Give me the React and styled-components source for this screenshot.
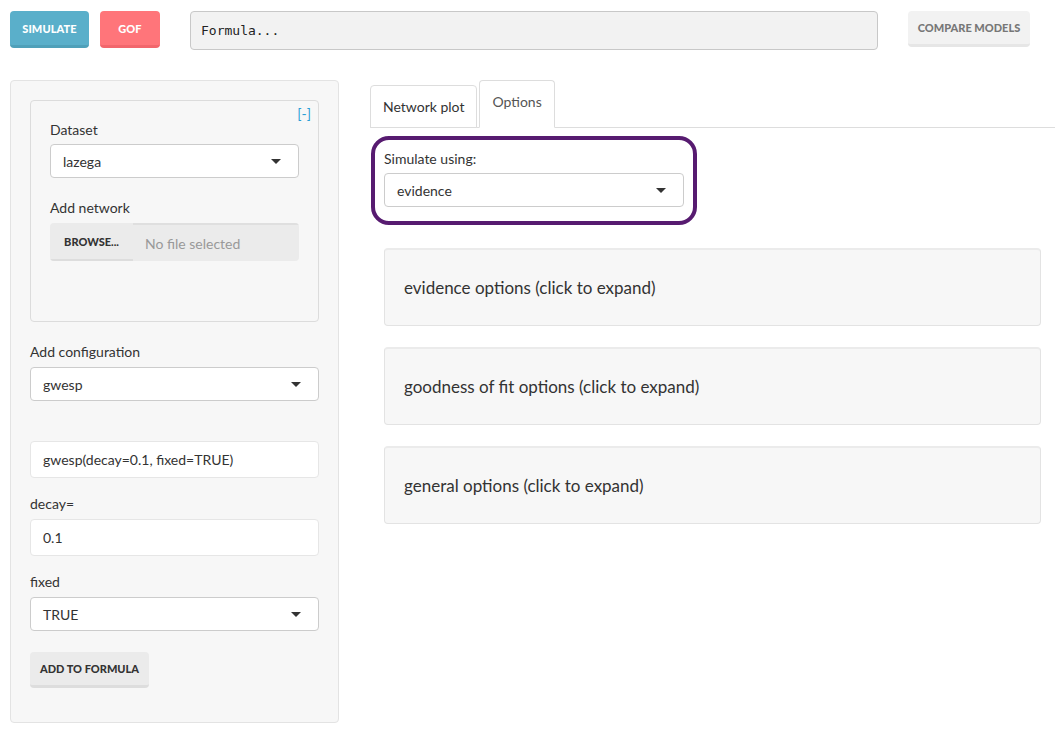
import React from "react"
import styled, { createGlobalStyle } from "styled-components"

const GlobalStyle = createGlobalStyle`
  body {
    margin: 0;
    background: #ffffff;
    color: #333333;
    font-family: "Lato", "Liberation Sans", sans-serif;
    font-size: 14px;
  }
  * {
    box-sizing: border-box;
  }
`

const Page = styled.div`
  width: 1055px;
  height: 729px;
  overflow: hidden;
`

const TopBar = styled.header`
  height: 80px;
  padding: 11px 0 0 10px;
  display: flex;
  align-items: flex-start;
`

const ActionButton = styled.button`
  height: 37px;
  width: ${(p) => p.$width}px;
  margin-left: ${(p) => p.$gap || 0}px;
  border: none;
  border-bottom: 3px solid ${(p) => p.$shade};
  border-radius: 4px;
  background: ${(p) => p.$bg};
  color: ${(p) => p.$color || "#ffffff"};
  font-family: "Lato", sans-serif;
  font-weight: 900;
  font-size: 11px;
  letter-spacing: 0.1px;
  text-transform: uppercase;
  padding: 0;
`

const FormulaInput = styled.div`
  margin-left: 30px;
  width: 688px;
  height: 39px;
  background: #f2f2f2;
  border: 1px solid #c8c8c8;
  border-radius: 4px;
  padding: 0 10px;
  display: flex;
  align-items: center;
  font-family: "DejaVu Sans Mono", "Liberation Mono", monospace;
  font-size: 13px;
  color: #222222;
`

const Layout = styled.div`
  display: grid;
  grid-template-columns: 329px 1fr;
  column-gap: 31px;
  padding-left: 10px;
`

const Well = styled.aside`
  height: 643px;
  background: #f7f7f7;
  border: 1px solid #e3e3e3;
  border-radius: 4px;
  padding: 19px 19px 0;
`

const InnerBox = styled.div`
  position: relative;
  height: 222px;
  border: 1px solid #dcdcdc;
  border-radius: 4px;
  padding: 19px 19px 0;
  margin-bottom: 20px;
`

const Collapse = styled.a`
  position: absolute;
  top: 4px;
  right: 7px;
  font-size: 14px;
  color: #2a9fd6;
  text-decoration: none;
`

const Label = styled.div`
  font-size: 14px;
  line-height: 20px;
  color: #333333;
  margin-bottom: ${(p) => p.$mb || 5}px;
`

const Group = styled.div`
  margin-bottom: ${(p) => p.$mb || 0}px;
`

const Select = styled.div`
  position: relative;
  height: 34px;
  width: 100%;
  background: #ffffff;
  border: 1px solid #cccccc;
  border-radius: 4px;
  padding: 0 12px;
  display: flex;
  align-items: center;
  font-size: 14px;
  color: #333333;

  &::after {
    content: "";
    position: absolute;
    right: 17px;
    top: 14px;
    border-left: 5px solid transparent;
    border-right: 5px solid transparent;
    border-top: 5px solid #333333;
  }
`

const TextInput = styled.div`
  height: 37px;
  background: #ffffff;
  border: 1px solid #e6e6e6;
  border-radius: 4px;
  padding: 0 12px;
  display: flex;
  align-items: center;
  font-size: 14px;
  color: #333333;
`

const FileInput = styled.div`
  display: flex;
  height: 38px;
  border-radius: 4px;
  overflow: hidden;
`

const BrowseButton = styled.div`
  width: 83px;
  background: #ebebeb;
  border-bottom: 2px solid #dddddd;
  display: flex;
  align-items: center;
  justify-content: center;
  font-size: 11px;
  font-weight: 900;
  color: #333333;
`

const FileName = styled.div`
  flex: 1;
  background: #ebebeb;
  border-top: 2px solid #dfdfdf;
  padding: 0 12px;
  display: flex;
  align-items: center;
  font-size: 14px;
  color: #999999;
`

const GrayButton = styled.button`
  height: 36px;
  width: ${(p) => p.$width}px;
  margin-left: ${(p) => p.$gap || 0}px;
  background: ${(p) => p.$bg || "#ebebeb"};
  border: none;
  border-bottom: 3px solid ${(p) => p.$shade || "#dddddd"};
  border-radius: 4px;
  font-family: "Lato", sans-serif;
  font-size: 11px;
  font-weight: 900;
  color: ${(p) => p.$color || "#333333"};
  padding: 0;
`

const Content = styled.main`
  padding-right: 0;
`

const TabBar = styled.nav`
  display: flex;
  align-items: flex-end;
  height: 48px;
  border-bottom: 1px solid #dddddd;
`

const Tab = styled.div`
  margin-right: 2px;
  margin-bottom: -1px;
  padding: 11px 12px ${(p) => (p.$active ? 15 : 10)}px;
  line-height: 20px;
  font-size: 14px;
  background: #ffffff;
  color: ${(p) => (p.$active ? "#555555" : "#333333")};
  border: 1px solid #dddddd;
  border-bottom-color: ${(p) => (p.$active ? "#ffffff" : "#dddddd")};
  border-radius: 4px 4px 0 0;
`

const Highlight = styled.div`
  width: 326px;
  margin: 8px 0 0 1px;
  border: 4px solid #571b70;
  border-radius: 18px;
  padding: 9px 9px 14px;
`

const Accordions = styled.div`
  display: flex;
  flex-direction: column;
  gap: 21px;
  margin: 23px 14px 0;
`

const Accordion = styled.div`
  height: 78px;
  background: #f7f7f7;
  border: 1px solid #e3e3e3;
  border-top: 2px solid #ebebeb;
  border-radius: 4px;
  padding: 0 19px;
  display: flex;
  align-items: center;
  font-size: 17px;
  color: #333333;
`

const sections = [
  "evidence options (click to expand)",
  "goodness of fit options (click to expand)",
  "general options (click to expand)",
]

export default function App() {
  return (
    <Page>
      <GlobalStyle />
      <TopBar>
        <ActionButton $width={79} $bg="#5aafca" $shade="#4fa0b9">
          Simulate
        </ActionButton>
        <ActionButton $width={60} $gap={11} $bg="#ff757a" $shade="#f2666c">
          GOF
        </ActionButton>
        <FormulaInput>Formula...</FormulaInput>
        <GrayButton $width={122} $gap={30} $bg="#f2f2f2" $shade="#e6e6e6" $color="#777777">
          COMPARE MODELS
        </GrayButton>
      </TopBar>
      <Layout>
        <Well>
          <InnerBox>
            <Collapse href="#">[-]</Collapse>
            <Group $mb={20}>
              <Label $mb={4}>Dataset</Label>
              <Select>lazega</Select>
            </Group>
            <Group>
              <Label>Add network</Label>
              <FileInput>
                <BrowseButton>BROWSE...</BrowseButton>
                <FileName>No file selected</FileName>
              </FileInput>
            </Group>
          </InnerBox>
          <Group $mb={40}>
            <Label $mb={5}>Add configuration</Label>
            <Select>gwesp</Select>
          </Group>
          <Group $mb={16}>
            <TextInput>gwesp(decay=0.1, fixed=TRUE)</TextInput>
          </Group>
          <Group $mb={16}>
            <Label>decay=</Label>
            <TextInput>0.1</TextInput>
          </Group>
          <Group $mb={21}>
            <Label>fixed</Label>
            <Select>TRUE</Select>
          </Group>
          <GrayButton $width={119}>ADD TO FORMULA</GrayButton>
        </Well>
        <Content>
          <TabBar>
            <Tab>Network plot</Tab>
            <Tab $active>Options</Tab>
          </TabBar>
          <Highlight>
            <Label $mb={4}>Simulate using:</Label>
            <Select>evidence</Select>
          </Highlight>
          <Accordions>
            {sections.map((s) => (
              <Accordion key={s}>{s}</Accordion>
            ))}
          </Accordions>
        </Content>
      </Layout>
    </Page>
  )
}
